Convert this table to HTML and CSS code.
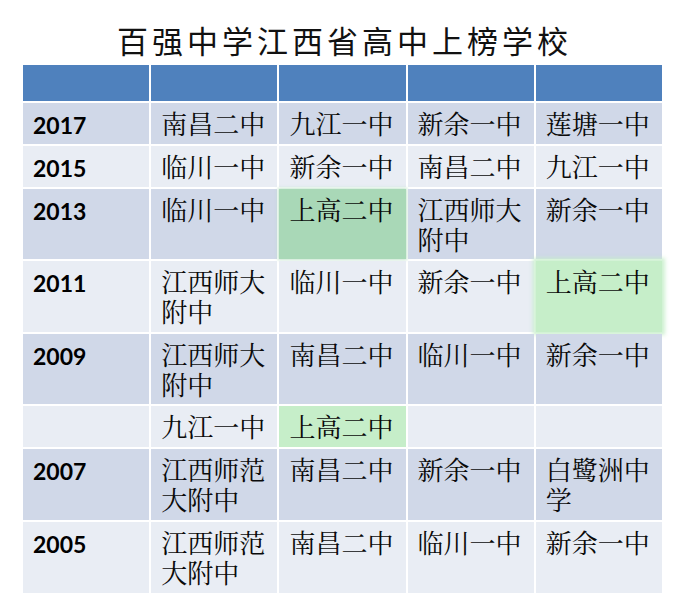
FILE: index.html
```html
<!DOCTYPE html>
<html lang="zh-CN">
<head>
<meta charset="utf-8">
<title>百强中学江西省高中上榜学校</title>
<link rel="stylesheet" href="styles.css">
</head>
<body>
<div class="slide">
  <h1 class="title">百强中学江西省高中上榜学校</h1>
  <div class="table">
    <div class="cell head"></div><div class="cell head"></div><div class="cell head"></div><div class="cell head"></div><div class="cell head"></div>

    <div class="cell dark year">2017</div><div class="cell dark">南昌二中</div><div class="cell dark">九江一中</div><div class="cell dark">新余一中</div><div class="cell dark">莲塘一中</div>

    <div class="cell light year">2015</div><div class="cell light">临川一中</div><div class="cell light">新余一中</div><div class="cell light">南昌二中</div><div class="cell light">九江一中</div>

    <div class="cell dark year">2013</div><div class="cell dark">临川一中</div><div class="cell green-dark">上高二中</div><div class="cell dark">江西师大附中</div><div class="cell dark">新余一中</div>

    <div class="cell light year">2011</div><div class="cell light">江西师大附中</div><div class="cell light">临川一中</div><div class="cell light">新余一中</div><div class="cell green-light glow">上高二中</div>

    <div class="cell dark year">2009</div><div class="cell dark">江西师大附中</div><div class="cell dark">南昌二中</div><div class="cell dark">临川一中</div><div class="cell dark">新余一中</div>

    <div class="cell light year"></div><div class="cell light">九江一中</div><div class="cell green-light">上高二中</div><div class="cell light"></div><div class="cell light"></div>

    <div class="cell dark year">2007</div><div class="cell dark">江西师范大附中</div><div class="cell dark">南昌二中</div><div class="cell dark">新余一中</div><div class="cell dark">白鹭洲中学</div>

    <div class="cell light year">2005</div><div class="cell light">江西师范大附中</div><div class="cell light">南昌二中</div><div class="cell light">临川一中</div><div class="cell light">新余一中</div>
  </div>
</div>
</body>
</html>
```

FILE: styles.css
```css
html, body {
  margin: 0;
  padding: 0;
  background: #ffffff;
}

.slide {
  width: 680px;
  height: 608px;
  padding-top: 20px;
  box-sizing: border-box;
}

.title {
  margin: 0 0 5px 23px;
  padding-left: 4px;
  width: 639px;
  box-sizing: border-box;
  text-align: center;
  font-family: "Noto Sans CJK SC", sans-serif;
  font-weight: 400;
  font-size: 31px;
  line-height: 40px;
  color: #111111;
  letter-spacing: 4px;
}

.table {
  margin-left: 23px;
  width: 639px;
  display: grid;
  grid-template-columns: repeat(5, 1fr);
  grid-template-rows: 36px 41px 41px 70px 71px 70px 41px 71px 71px;
  gap: 2px;
}

.cell {
  box-sizing: border-box;
  padding: 5px 8px 0 10px;
  font-family: "Noto Serif CJK SC", "Noto Sans CJK SC", serif;
  font-size: 26px;
  line-height: 30px;
  color: #0a0a0a;
  overflow: visible;
}

.head {
  background: #4f81bd;
}

.dark {
  background: #d0d8e8;
}

.light {
  background: #e9edf4;
}

.green-dark {
  background: #a9d8b7;
  box-shadow: 0 0 3px 1px rgba(169, 216, 183, 0.7);
}

.green-light {
  background: #c6eec9;
}

.glow {
  box-shadow: 0 0 4px 3px rgba(198, 238, 201, 0.85);
}

.year {
  font-family: "Lato", "Liberation Sans", sans-serif;
  font-weight: 700;
  font-size: 23px;
  padding-top: 7px;
  color: #000000;
}
```
